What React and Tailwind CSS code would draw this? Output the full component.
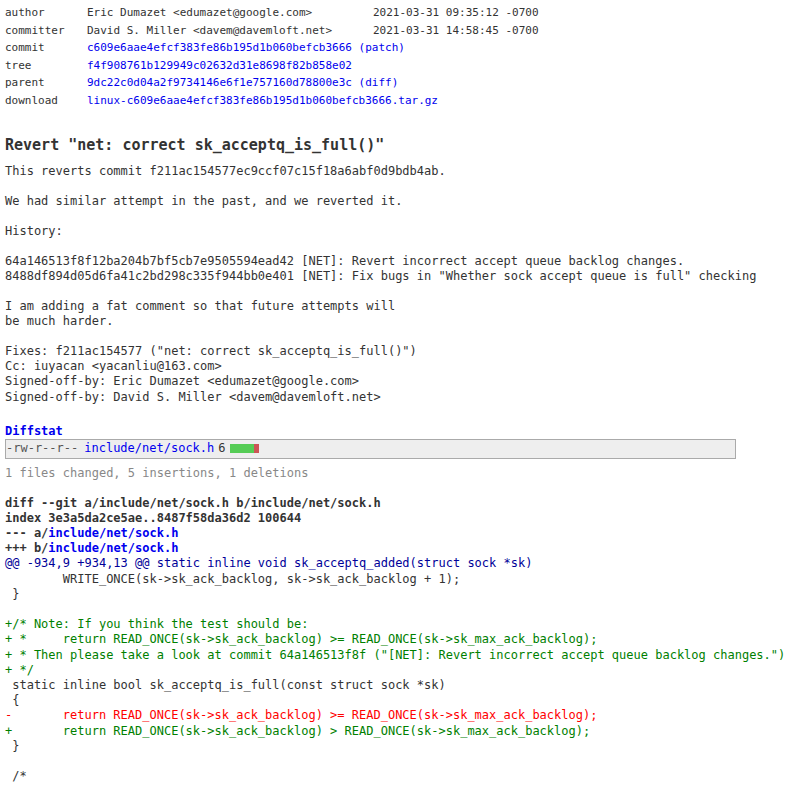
import React from 'react';

const mono = "font-['DejaVu_Sans_Mono','Liberation_Mono',monospace]";

const info = [
    { label: 'author', value: 'Eric Dumazet <edumazet@google.com>', date: '2021-03-31 09:35:12 -0700' },
    { label: 'committer', value: 'David S. Miller <davem@davemloft.net>', date: '2021-03-31 14:58:45 -0700' },
    { label: 'commit', link: 'c609e6aae4efcf383fe86b195d1b060befcb3666', extra: 'patch' },
    { label: 'tree', link: 'f4f908761b129949c02632d31e8698f82b858e02' },
    { label: 'parent', link: '9dc22c0d04a2f9734146e6f1e757160d78800e3c', extra: 'diff' },
    { label: 'download', link: 'linux-c609e6aae4efcf383fe86b195d1b060befcb3666.tar.gz' },
];

const message = `This reverts commit f211ac154577ec9ccf07c15f18a6abf0d9bdb4ab.

We had similar attempt in the past, and we reverted it.

History:

64a146513f8f12ba204b7bf5cb7e9505594ead42 [NET]: Revert incorrect accept queue backlog changes.
8488df894d05d6fa41c2bd298c335f944bb0e401 [NET]: Fix bugs in "Whether sock accept queue is full" checking

I am adding a fat comment so that future attempts will
be much harder.

Fixes: f211ac154577 ("net: correct sk_acceptq_is_full()")
Cc: iuyacan <yacanliu@163.com>
Signed-off-by: Eric Dumazet <edumazet@google.com>
Signed-off-by: David S. Miller <davem@davemloft.net>`;

const diffLines = [
    { t: 'hunk', s: '@@ -934,9 +934,13 @@ static inline void sk_acceptq_added(struct sock *sk)' },
    { t: 'ctx', s: ' \tWRITE_ONCE(sk->sk_ack_backlog, sk->sk_ack_backlog + 1);' },
    { t: 'ctx', s: ' }' },
    { t: 'ctx', s: ' ' },
    { t: 'add', s: '+/* Note: If you think the test should be:' },
    { t: 'add', s: '+ *\treturn READ_ONCE(sk->sk_ack_backlog) >= READ_ONCE(sk->sk_max_ack_backlog);' },
    { t: 'add', s: '+ * Then please take a look at commit 64a146513f8f ("[NET]: Revert incorrect accept queue backlog changes.")' },
    { t: 'add', s: '+ */' },
    { t: 'ctx', s: ' static inline bool sk_acceptq_is_full(const struct sock *sk)' },
    { t: 'ctx', s: ' {' },
    { t: 'del', s: '-\treturn READ_ONCE(sk->sk_ack_backlog) >= READ_ONCE(sk->sk_max_ack_backlog);' },
    { t: 'add', s: '+\treturn READ_ONCE(sk->sk_ack_backlog) > READ_ONCE(sk->sk_max_ack_backlog);' },
    { t: 'ctx', s: ' }' },
    { t: 'ctx', s: ' ' },
    { t: 'ctx', s: ' /*' },
];

const lineColor = {
    hunk: 'text-[#000099]',
    ctx: 'text-[#333]',
    add: 'text-[#008000]',
    del: 'text-[#ff0000]',
};

export default function App() {
    return (
        <div className={`${mono} bg-white text-[#333] px-[5px] pt-[4px] min-h-[796px] [tab-size:8]`}>
            {/* commit info */}
            <table className="text-[11px] leading-[17.6px] border-collapse">
                <tbody>
                    {info.map((r) => (
                        <tr key={r.label}>
                            <td className="w-[82px] p-0 align-top">{r.label}</td>
                            {r.date ? (
                                <>
                                    <td className="w-[286px] p-0">{r.value}</td>
                                    <td className="p-0">{r.date}</td>
                                </>
                            ) : (
                                <td colSpan={2} className="p-0 text-[#0000ee]">
                                    {r.link}
                                    {r.extra && <span> ({r.extra})</span>}
                                </td>
                            )}
                        </tr>
                    ))}
                </tbody>
            </table>

            {/* subject + message */}
            <div className="mt-[26px] text-[15px] leading-[18px] font-bold">
                Revert "net: correct sk_acceptq_is_full()"
            </div>
            <pre className={`${mono} mt-[10px] text-[12px] leading-[15.07px] whitespace-pre`}>{message}</pre>

            {/* diffstat */}
            <div className="mt-[19px] text-[12px] leading-[15px] font-bold text-[#0000ee]">Diffstat</div>
            <div className="w-[731px] h-[20px] bg-[#eeeeee] border border-[#aaaaaa] flex items-center text-[12px] leading-[15px]">
                <span className="text-[#555]">-rw-r--r--</span>
                <span className="ml-[6px] text-[#0000ee]">include/net/sock.h</span>
                <span className="ml-[4px]">6</span>
                <span className="ml-[4px] flex h-[9px]">
                    <span className="w-[24px] bg-[#5c5]"></span>
                    <span className="w-[5px] bg-[#c55]"></span>
                </span>
            </div>
            <div className="mt-[7px] text-[12px] leading-[15px] text-[#888]">
                1 files changed, 5 insertions, 1 deletions
            </div>

            {/* diff */}
            <div className="mt-[15px] text-[12px] leading-[15.2px] whitespace-pre">
                <div className="font-bold">diff --git a/include/net/sock.h b/include/net/sock.h</div>
                <div className="font-bold">index 3e3a5da2ce5ae..8487f58da36d2 100644</div>
                <div className="font-bold">--- a/<span className="text-[#0000ee]">include/net/sock.h</span></div>
                <div className="font-bold">+++ b/<span className="text-[#0000ee]">include/net/sock.h</span></div>
                {diffLines.map((l, i) => (
                    <div key={i} className={lineColor[l.t]}>{l.s}</div>
                ))}
            </div>
        </div>
    );
}
